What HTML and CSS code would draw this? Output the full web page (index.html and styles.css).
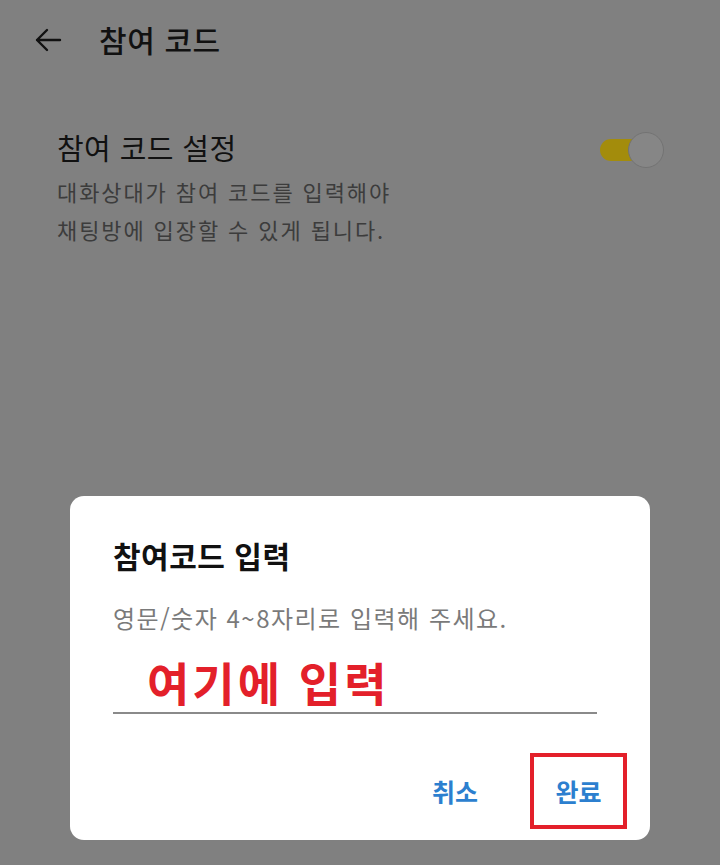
FILE: index.html
```html
<!DOCTYPE html>
<html lang="ko">

<head>
    <meta charset="UTF-8">
    <meta name="viewport" content="width=device-width, initial-scale=1.0">
    <title>참여 코드</title>
    <link rel="stylesheet" href="styles.css">
</head>

<body>
    <div class="screen">
        <div class="topbar">
            <button class="back">
                <svg width="30" height="30" viewBox="0 0 30 30">
                    <path d="M27 15H4M14 5L4 15l10 10" fill="none" stroke="#111" stroke-width="2.4" stroke-linecap="round" stroke-linejoin="round"/>
                </svg>
            </button>
            <h1 class="title">참여 코드</h1>
        </div>

        <div class="setting">
            <div class="setting-text">
                <h2>참여 코드 설정</h2>
                <p>대화상대가 참여 코드를 입력해야<br>채팅방에 입장할 수 있게 됩니다.</p>
            </div>
            <div class="toggle">
                <span class="knob"></span>
            </div>
        </div>

        <div class="dialog">
            <h3 class="dialog-title">참여코드 입력</h3>
            <p class="dialog-hint">영문/숫자 4~8자리로 입력해 주세요.</p>
            <div class="field">
                <span class="mark">여기에 입력</span>
            </div>
            <div class="actions">
                <button class="btn">취소</button>
                <button class="btn boxed">완료</button>
            </div>
        </div>
    </div>
</body>

</html>
```

FILE: styles.css
```css
* {
    margin: 0;
    padding: 0;
    box-sizing: border-box;
    font-family: "Noto Sans CJK KR", "Noto Sans", sans-serif;
}

body {
    background-color: #808080;
}

.screen {
    width: 720px;
    height: 865px;
    display: flex;
    flex-direction: column;
}

.topbar {
    display: flex;
    align-items: center;
    height: 80px;
    padding-left: 33px;
}

.back {
    border: 0;
    background: none;
    width: 30px;
    height: 30px;
    margin-right: 36px;
}

.title {
    font-size: 30px;
    font-weight: 500;
    color: #111;
    margin-top: -2px;
    letter-spacing: 0.6px;
}

.setting {
    display: flex;
    justify-content: space-between;
    align-items: flex-start;
    padding: 46px 56px 0 57px;
}

.setting h2 {
    font-size: 29px;
    font-weight: 400;
    color: #111;
    line-height: 42px;
    letter-spacing: 0.4px;
}

.setting p {
    font-size: 22px;
    color: #3c3c3c;
    line-height: 38px;
    margin-top: 4px;
    letter-spacing: 1.9px;
}

.toggle {
    position: relative;
    width: 42px;
    height: 22px;
    border-radius: 11px;
    background-color: #a38c0c;
    margin-top: 13px;
    margin-right: 22px;
}

.knob {
    position: absolute;
    right: -22px;
    top: -7px;
    width: 36px;
    height: 36px;
    border-radius: 50%;
    background-color: #868686;
    border: 1.5px solid #737373;
}

.dialog {
    width: 580px;
    height: 344px;
    margin: 248px 0 0 70px;
    background-color: #fff;
    border-radius: 14px;
    padding: 38px 53px 0 43px;
}

.dialog-title {
    font-size: 30px;
    font-weight: 700;
    color: #111;
    line-height: 42px;
    letter-spacing: 0.5px;
}

.dialog-hint {
    font-size: 24px;
    color: #7a7a7a;
    margin-top: 26px;
    line-height: 32px;
    letter-spacing: 1.5px;
}

.field {
    border-bottom: 2px solid #8a8a8a;
    height: 72px;
    padding-left: 34px;
    padding-top: 9px;
    margin-top: 8px;
}

.mark {
    font-size: 46px;
    font-weight: 700;
    color: #e3202a;
    line-height: 60px;
    letter-spacing: 3px;
}

.actions {
    display: flex;
    justify-content: flex-end;
    align-items: center;
    gap: 30px;
    margin-top: 39px;
    margin-right: -30px;
}

.btn {
    border: 0;
    background: none;
    font-size: 25px;
    font-weight: 700;
    color: #2c7fcf;
    height: 76px;
    padding: 0 22px;
}

.boxed {
    border: 4px solid #e3202a;
    width: 97px;
    padding: 0;
}
```
